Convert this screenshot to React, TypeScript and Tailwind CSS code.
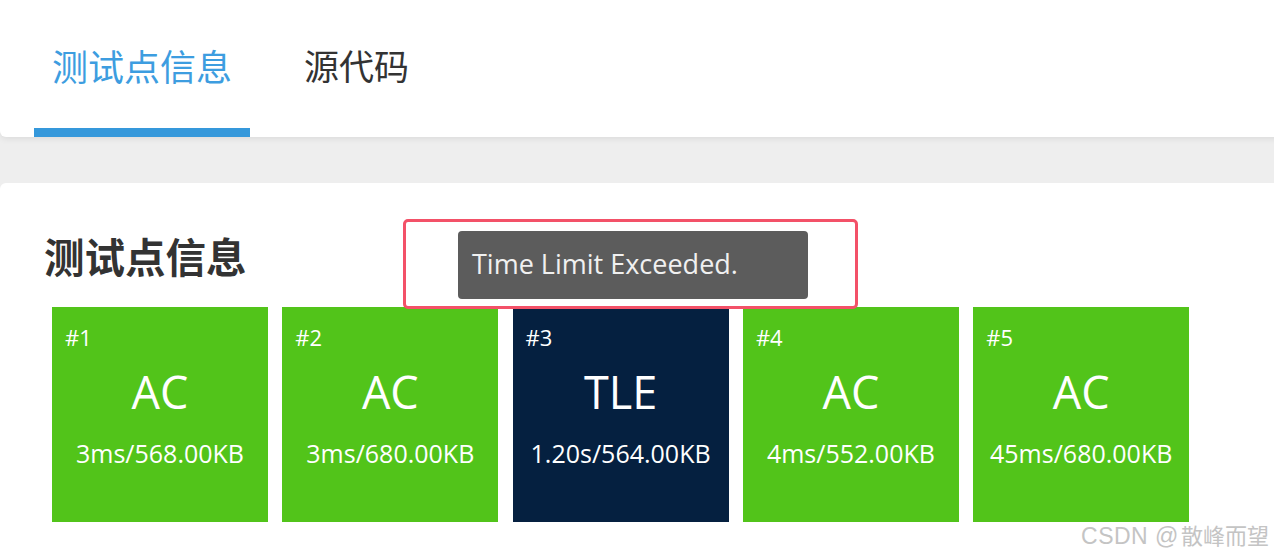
const cases = [
	{ id: 1, status: 'AC', stat: '3ms/568.00KB' },
	{ id: 2, status: 'AC', stat: '3ms/680.00KB' },
	{ id: 3, status: 'TLE', stat: '1.20s/564.00KB' },
	{ id: 4, status: 'AC', stat: '4ms/552.00KB' },
	{ id: 5, status: 'AC', stat: '45ms/680.00KB' },
]

const cjk = "font-['Noto_Sans_CJK_SC','Noto_Sans',sans-serif]"
const latin = "font-['Open_Sans','Noto_Sans',sans-serif]"

function CaseBox({ id, status, stat }: { id: number; status: string; stat: string }) {
	const ok = status === 'AC'
	return (
		<div
			className={`flex h-[215px] w-[216px] shrink-0 flex-col text-white ${latin} ${
				ok ? 'bg-[#52c41a]' : 'bg-[#052040]'
			}`}
		>
			<div className="mt-[17px] pl-[13px] text-[22px] leading-[26px]">#{id}</div>
			<div className="mt-[14px] text-center text-[45px] leading-[56px]">{status}</div>
			<div className="mt-[18px] text-center text-[25px] leading-[30px]">{stat}</div>
		</div>
	)
}

export default function App() {
	return (
		<div className="relative h-[556px] w-[1274px] overflow-hidden bg-[#eeeeee]">
			{/* tabs */}
			<div className="-mr-4 flex h-[137px] rounded-b-md bg-white pl-[34px] shadow-[0_2px_6px_rgba(0,0,0,0.08)]">
				<div className="flex w-[216px] flex-col items-center">
					<div className={`pt-[40px] text-[36px] leading-[50px] text-[#3d9de0] ${cjk}`}>测试点信息</div>
					<div className="mt-auto h-[9px] w-full bg-[#3598db]" />
				</div>
				<div className={`ml-[54px] pt-[40px] text-[35px] leading-[50px] text-[#333333] ${cjk}`}>源代码</div>
			</div>

			{/* case list */}
			<div className="relative -mr-4 mt-[46px] h-[400px] rounded-t-md bg-white">
				<h2 className={`pl-[44px] pt-[48px] text-[40.5px] font-bold leading-[50px] text-[#333333] ${cjk}`}>
					测试点信息
				</h2>
				<div className="mt-[26px] flex gap-[14.3px] pl-[52px]">
					{cases.map((c) => (
						<CaseBox key={c.id} {...c} />
					))}
				</div>

				{/* tooltip, marked by red box */}
				<div className="absolute left-[403px] top-[36px] h-[90px] w-[455px] rounded-[5px] border-[3.5px] border-[#f35168] bg-white pl-[52px] pt-[8.5px]">
					<div className="flex h-[68px] w-[350px] items-center rounded-[4px] bg-[#5c5c5c] pl-[14px]">
						<span className={`text-[27px] text-[#f0f0f0] ${latin}`}>Time Limit Exceeded.</span>
					</div>
				</div>
			</div>

			{/* watermark */}
			<div className="absolute bottom-[7px] right-[5px] flex items-baseline text-[22px] leading-[26px] text-[#c4c4c4] [text-shadow:0_0_2px_#ffffff]">
				<span className="mr-[2px] font-['Liberation_Sans',Arial,sans-serif] text-[23px] tracking-[0.5px]">CSDN @</span>
				<span className="font-['Noto_Sans_CJK_SC',sans-serif]">散峰而望</span>
			</div>
		</div>
	)
}
